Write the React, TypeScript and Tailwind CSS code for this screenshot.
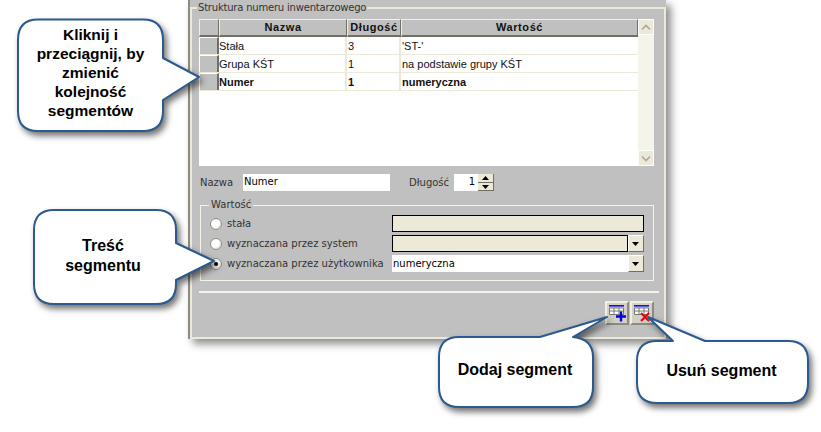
const ui = { fontFamily: '"DejaVu Sans", sans-serif' };

const rows = [
  { name: "Stała", len: "3", value: "'ST-'" },
  { name: "Grupa KŚT", len: "1", value: "na podstawie grupy KŚT" },
  { name: "Numer", len: "1", value: "numeryczna", bold: true },
];

function HeaderCell({ className, children }: { className: string; children?: React.ReactNode }) {
  return (
    <div className={`${className} h-[18px] shrink-0 flex items-center justify-center bg-[#c0c0c0] border-t border-l border-t-[#f1efe2] border-l-[#f1efe2] border-r border-b-2 border-r-[#716f64] border-b-[#716f64] font-bold text-[11px] text-[#111] [font-family:'Liberation_Sans',sans-serif] tracking-[0.6px]`}>
      {children}
    </div>
  );
}

function Table() {
  return (
    <div className="flex h-[147px] w-[455px] bg-white">
      <div className="w-[439px]">
        <div className="flex">
          <HeaderCell className="w-[20px]" />
          <HeaderCell className="w-[128px]">Nazwa</HeaderCell>
          <HeaderCell className="w-[54px]">Długość</HeaderCell>
          <HeaderCell className="w-[237px]">Wartość</HeaderCell>
        </div>
        {rows.map((r) => (
          <div key={r.name} className={`flex h-[18px] border-b border-[#ece9d8] text-[11px] leading-[18px] text-[#111] [font-family:'Liberation_Sans',sans-serif] ${r.bold ? "font-bold" : ""}`}>
            <div className="w-[20px] shrink-0 bg-[#c0c0c0] border-t border-l border-white border-r-2 border-r-[#716f64] border-b-[#c0c0c0]" />
            <div className="w-[128px] shrink-0 border-r-2 border-[#ece9d8]">{r.name}</div>
            <div className="w-[54px] shrink-0 border-r-2 border-[#ece9d8] pl-[1px]">{r.len}</div>
            <div className="pl-[1px]">{r.value}</div>
          </div>
        ))}
      </div>
      <div className="w-[16px] flex flex-col justify-between bg-[#f5f4ea]">
        <ScrollButton dir="up" />
        <ScrollButton dir="down" />
      </div>
    </div>
  );
}

function ScrollButton({ dir }: { dir: "up" | "down" }) {
  return (
    <div className="w-[16px] h-[16px] bg-[#ece9d8] border border-[#fffef8] flex items-center justify-center">
      <svg width="10" height="7" viewBox="0 0 10 7">
        <path d={dir === "up" ? "M1 5.5 L5 1.5 L9 5.5" : "M1 1.5 L5 5.5 L9 1.5"} fill="none" stroke="#a9a99c" strokeWidth="1.6" />
      </svg>
    </div>
  );
}

function Radio({ checked }: { checked?: boolean }) {
  return (
    <span className="w-[12px] h-[12px] rounded-full bg-white border border-[#8f8d80] shadow-[inset_-1px_-1px_1px_#e4e2d6] flex items-center justify-center shrink-0">
      {checked && <span className="w-[4px] h-[4px] rounded-full bg-black" />}
    </span>
  );
}

function DropButton() {
  return (
    <div className="w-[16px] h-[17px] shrink-0 bg-[#ece9d8] border-r border-b border-[#716f64] border-t border-l border-t-white border-l-white flex items-center justify-center">
      <svg width="8" height="4" viewBox="0 0 8 4"><path d="M0 0 H7 L3.5 4 Z" fill="#000" /></svg>
    </div>
  );
}

function ValueRow({ label, checked, children }: { label: string; checked?: boolean; children: React.ReactNode }) {
  return (
    <div className="flex items-center h-[17px]">
      <div className="w-[9px]" />
      <Radio checked={checked} />
      <span className="ml-[5px] w-[165px] shrink-0 whitespace-nowrap text-[#333]">{label}</span>
      {children}
    </div>
  );
}

function ToolButton({ kind }: { kind: "add" | "remove" }) {
  return (
    <div className="w-[24px] h-[24px] bg-[#d4d0c8] border-2 border-t-[#f1efe2] border-l-[#f1efe2] border-r-[#8d8b80] border-b-[#8d8b80]">
      <svg width="20" height="20" viewBox="0 0 20 20" className="block">
        <rect x="2" y="2" width="15" height="1.6" fill="#1414e6" />
        <path d="M2.5 5 H16.5 V11.5 H2.5 Z M2.5 8 H16.5 M7 5 V11.5 M12 5 V11.5" fill="#fff" stroke="#77776f" strokeWidth="1" />
        {kind === "add" ? (
          <path d="M14 8.5 V18.5 M9 13.5 H19" stroke="#0000e0" strokeWidth="2.4" />
        ) : (
          <path d="M9 10 L17 18 M17 10 L9 18" stroke="#ee0000" strokeWidth="2" />
        )}
      </svg>
    </div>
  );
}

function Callouts() {
  return (
    <svg width="821" height="432" viewBox="0 0 821 432" className="absolute left-0 top-0 pointer-events-none [filter:drop-shadow(3px_4px_3px_rgba(0,0,0,0.55))]">
      <g fill="#fff" stroke="#2c5a8c" strokeWidth="2" strokeLinejoin="round">
        <path d="M38 19.5 H143 Q163 19.5 163 40 V58 L199 77 L163 100 V111 Q163 131 143 131 H38 Q18 131 18 111 V40 Q18 19.5 38 19.5 Z" />
        <path d="M54 210 H156 Q176 210 176 230 V243 L214 261 L176 280 V284 Q176 304 156 304 H54 Q34 304 34 284 V230 Q34 210 54 210 Z" />
        <path d="M459 337 H540 L607 317 L573 337 Q593 339 593 357 V387 Q593 407 573 407 H459 Q439 407 439 387 V357 Q439 337 459 337 Z" />
        <path d="M657 341 H673 L648 317 L705 341 H788 Q808 341 808 361 V383 Q808 403 788 403 H657 Q637 403 637 383 V361 Q637 341 657 341 Z" />
      </g>
    </svg>
  );
}

function Label({ className, children }: { className: string; children: React.ReactNode }) {
  return (
    <div className={`absolute text-center text-black font-bold [font-family:'Liberation_Sans',sans-serif] ${className}`}>
      {children}
    </div>
  );
}

export default function App() {
  return (
    <div className="relative w-[821px] h-[432px] bg-white overflow-hidden">
      <div className="ml-[188px] w-[478px] h-[339px] bg-[#c0c0c0] border-l-2 border-[#8b8b84] shadow-[5px_5px_8px_rgba(0,0,0,0.45)] pt-[2px]">
        <fieldset style={ui} className="h-[337px] w-[476px] border-2 border-[#ece9d8] text-[10px] text-[#333] pl-[7px] pt-0">
          <legend className="-ml-[2px] px-[1px] leading-[12px] tracking-[-0.2px]">Struktura numeru inwentarzowego</legend>
          <div className="mt-[5px]">
            <Table />
          </div>
          <div className="flex items-center h-[17px] mt-[8px]">
            <span className="w-[44px] pl-[1px] leading-[15px] pb-[1px]">Nazwa</span>
            <div className="w-[147px] h-[17px] bg-white text-black pl-[1px] leading-[15px]">Numer</div>
            <span className="ml-[19px] w-[45px] leading-[15px] pb-[1px]">Długość</span>
            <div className="w-[24px] h-[17px] bg-white text-black text-right pr-[3px] leading-[15px]">1</div>
            <div className="w-[16px] h-[17px] flex flex-col">
              <div className="h-[9px] bg-[#ece9d8] border-r border-b border-[#716f64] flex items-center justify-center">
                <svg width="8" height="4" viewBox="0 0 8 4"><path d="M0 4 H7 L3.5 0 Z" fill="#000" /></svg>
              </div>
              <div className="h-[8px] bg-[#ece9d8] border-r border-b border-[#716f64] flex items-center justify-center">
                <svg width="8" height="4" viewBox="0 0 8 4"><path d="M0 0 H7 L3.5 4 Z" fill="#000" /></svg>
              </div>
            </div>
          </div>
          <fieldset className="mt-[8px] ml-[1px] w-[454px] h-[82px] border border-[#f4f3ec] pt-[4px]">
            <legend className="ml-[8px] px-[2px] leading-[12px]">Wartość</legend>
            <div className="flex flex-col gap-[3px]">
              <ValueRow label="stała">
                <div className="w-[252px] h-[17px] bg-[#ece9d8] border border-black" />
              </ValueRow>
              <ValueRow label="wyznaczana przez system">
                <div className="w-[236px] h-[17px] bg-[#ece9d8] border border-black" />
                <DropButton />
              </ValueRow>
              <ValueRow label="wyznaczana przez użytkownika" checked>
                <div className="w-[236px] h-[17px] bg-white text-black leading-[17px] pl-[1px]">numeryczna</div>
                <DropButton />
              </ValueRow>
            </div>
          </fieldset>
          <div className="mt-[10px] w-[460px] h-[2px] bg-[#f4f3ec]" />
          <div className="mt-[8px] w-[455px] flex justify-end gap-[1px]">
            <ToolButton kind="add" />
            <ToolButton kind="remove" />
          </div>
        </fieldset>
      </div>

      <Callouts />
      <Label className="left-[18px] top-[25px] w-[145px] text-[15.5px] leading-[19px]">
        Kliknij i<br />przeciągnij, by<br />zmienić<br />kolejność<br />segmentów
      </Label>
      <Label className="left-[33px] top-[236px] w-[140px] text-[16px] leading-[20px]">
        Treść<br />segmentu
      </Label>
      <Label className="left-[439px] top-[360px] w-[152px] text-[16px] leading-[19px]">Dodaj segment</Label>
      <Label className="left-[637px] top-[361px] w-[169px] text-[16px] leading-[19px]">Usuń segment</Label>
    </div>
  );
}
